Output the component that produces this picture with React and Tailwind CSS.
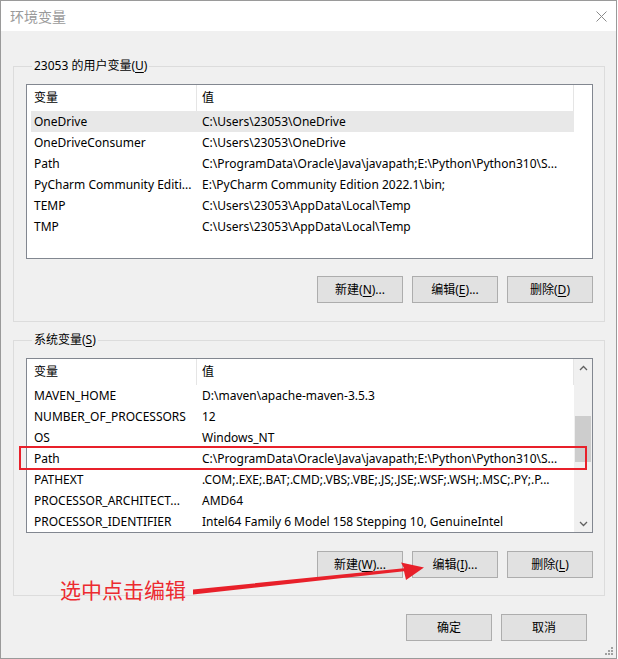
import React from 'react';

const userVars = [
  ['OneDrive', 'C:\\Users\\23053\\OneDrive'],
  ['OneDriveConsumer', 'C:\\Users\\23053\\OneDrive'],
  ['Path', 'C:\\ProgramData\\Oracle\\Java\\javapath;E:\\Python\\Python310\\S...'],
  ['PyCharm Community Editi...', 'E:\\PyCharm Community Edition 2022.1\\bin;'],
  ['TEMP', 'C:\\Users\\23053\\AppData\\Local\\Temp'],
  ['TMP', 'C:\\Users\\23053\\AppData\\Local\\Temp'],
];

const sysVars = [
  ['MAVEN_HOME', 'D:\\maven\\apache-maven-3.5.3'],
  ['NUMBER_OF_PROCESSORS', '12'],
  ['OS', 'Windows_NT'],
  ['Path', 'C:\\ProgramData\\Oracle\\Java\\javapath;E:\\Python\\Python310\\S...'],
  ['PATHEXT', '.COM;.EXE;.BAT;.CMD;.VBS;.VBE;.JS;.JSE;.WSF;.WSH;.MSC;.PY;.P...'],
  ['PROCESSOR_ARCHITECT...', 'AMD64'],
  ['PROCESSOR_IDENTIFIER', 'Intel64 Family 6 Model 158 Stepping 10, GenuineIntel'],
];

function Btn({ label, keyChar }) {
  return (
    <button className="w-[86px] h-[27px] bg-[#e1e1e1] border border-[#adadad] text-[12px] text-black flex items-center justify-center">
      {label}
      {keyChar && (
        <>
          (<span className="underline underline-offset-2">{keyChar}</span>)...
        </>
      )}
    </button>
  );
}

function Chevron({ up }) {
  return (
    <svg width="9" height="6" viewBox="0 0 9 6">
      <polyline
        points={up ? '1,5 4.5,1.5 8,5' : '1,1 4.5,4.5 8,1'}
        fill="none"
        stroke="#606060"
        strokeWidth="1.3"
      />
    </svg>
  );
}

function VarList({ rows, selected, scroll }) {
  return (
    <div className="w-[567px] h-[175px] border border-[#828790] bg-white flex">
      <div className="w-[547px] flex flex-col">
        {/* header */}
        <div className="h-[26px] flex shrink-0">
          <div className="w-[170px] pl-[7px] flex items-center border-r border-[#e5e5e5]">变量</div>
          <div className="flex-1 pl-[5px] flex items-center border-r border-[#e5e5e5]">值</div>
        </div>
        <div className="pl-[4px]">
          {rows.map(([name, value], i) => (
            <div
              key={name + i}
              className={`h-[21px] flex items-center whitespace-nowrap ${i === selected ? 'bg-[#e8e8e8]' : ''}`}
            >
              <div className="w-[166px] pl-[3px] overflow-hidden">{name}</div>
              <div className="flex-1 pl-[5px] overflow-hidden">{value}</div>
            </div>
          ))}
        </div>
      </div>
      {scroll ? (
        <div className="w-[18px] bg-[#f0f0f0] flex flex-col">
          <div className="h-[17px] flex items-center justify-center shrink-0">
            <Chevron up />
          </div>
          <div className="flex-1 px-[1px]">
            <div className="mt-[40px] h-[46px] bg-[#cdcdcd]" />
          </div>
          <div className="h-[17px] flex items-center justify-center shrink-0">
            <Chevron />
          </div>
        </div>
      ) : (
        <div className="w-[18px]" />
      )}
    </div>
  );
}

export default function App() {
  return (
    <div className="w-[618px] h-[659px] bg-white relative text-[12px] text-black font-['Noto_Sans','Noto_Sans_CJK_SC',sans-serif]">
      <div className="w-[617px] h-[659px] border border-[#9a9a9a] flex flex-col">
        {/* Title bar */}
        <div className="h-[30px] bg-white flex items-center justify-between pl-[9px] pr-[9px] shrink-0">
          <span className="text-[14px] text-[#9a9a9a] font-['Noto_Sans_CJK_SC',sans-serif]">环境变量</span>
          <svg width="11" height="11" viewBox="0 0 11 11">
            <path d="M0.5 0.5 L10.5 10.5 M10.5 0.5 L0.5 10.5" stroke="#8a8a8a" strokeWidth="1" />
          </svg>
        </div>

        <div className="flex-1 bg-[#f0f0f0] pl-[12px] flex flex-col">
          {/* user variables */}
          <fieldset className="w-[592px] mt-[27px] border border-[#dcdcdc] pt-[10px] pb-[18px] pl-[12px]">
            <legend className="ml-[6px] px-[2px] leading-[16px]">
              23053 的用户变量(<span className="underline underline-offset-2">U</span>)
            </legend>
            <VarList rows={userVars} selected={0} />
            <div className="flex justify-end gap-[9px] mt-[17px] pr-[11px]">
              <Btn label="新建" keyChar="N" />
              <Btn label="编辑" keyChar="E" />
              <button className="w-[86px] h-[27px] bg-[#e1e1e1] border border-[#adadad] text-[12px] flex items-center justify-center">
                删除(<span className="underline underline-offset-2">D</span>)
              </button>
            </div>
          </fieldset>

          {/* system variables */}
          <fieldset className="w-[592px] mt-[10px] border border-[#dcdcdc] pt-[10px] pb-[17px] pl-[12px]">
            <legend className="ml-[6px] px-[2px] leading-[16px]">
              系统变量(<span className="underline underline-offset-2">S</span>)
            </legend>
            <VarList rows={sysVars} selected={-1} scroll />
            <div className="flex justify-end gap-[9px] mt-[18px] pr-[11px]">
              <Btn label="新建" keyChar="W" />
              <Btn label="编辑" keyChar="I" />
              <button className="w-[86px] h-[27px] bg-[#e1e1e1] border border-[#adadad] text-[12px] flex items-center justify-center">
                删除(<span className="underline underline-offset-2">L</span>)
              </button>
            </div>
          </fieldset>

          <div className="w-[592px] flex justify-end gap-[9px] mt-[18px] pr-[18px]">
            <button className="w-[86px] h-[27px] bg-[#e1e1e1] border border-[#adadad] text-[12px]">确定</button>
            <button className="w-[86px] h-[27px] bg-[#e1e1e1] border border-[#adadad] text-[12px]">取消</button>
          </div>
        </div>
      </div>

      {/* annotation: red highlight box */}
      <div className="absolute left-[19px] top-[446px] w-[568px] h-[24px] border-2 border-[#e8202a]" />

      {/* annotation: arrow */}
      <svg className="absolute left-0 top-0" width="618" height="659" viewBox="0 0 618 659">
        <polygon
          points="193,589.5 404,568.2 401,562.5 424,567.5 406,580 404,571.2 193,594.5"
          fill="#e8202a"
        />
      </svg>
      <div className="absolute left-[60px] top-[576px] text-[21px] leading-[26px] text-[#ec2a2f] font-['Noto_Sans_CJK_SC',sans-serif]">
        选中点击编辑
      </div>

      {/* resize grip */}
      <svg className="absolute right-[4px] bottom-[3px]" width="9" height="9" viewBox="0 0 9 9">
        <rect x="6" y="0" width="2" height="2" fill="#a0a0a0" />
        <rect x="3" y="3" width="2" height="2" fill="#a0a0a0" />
        <rect x="6" y="3" width="2" height="2" fill="#a0a0a0" />
        <rect x="0" y="6" width="2" height="2" fill="#a0a0a0" />
        <rect x="3" y="6" width="2" height="2" fill="#a0a0a0" />
        <rect x="6" y="6" width="2" height="2" fill="#a0a0a0" />
      </svg>
    </div>
  );
}
